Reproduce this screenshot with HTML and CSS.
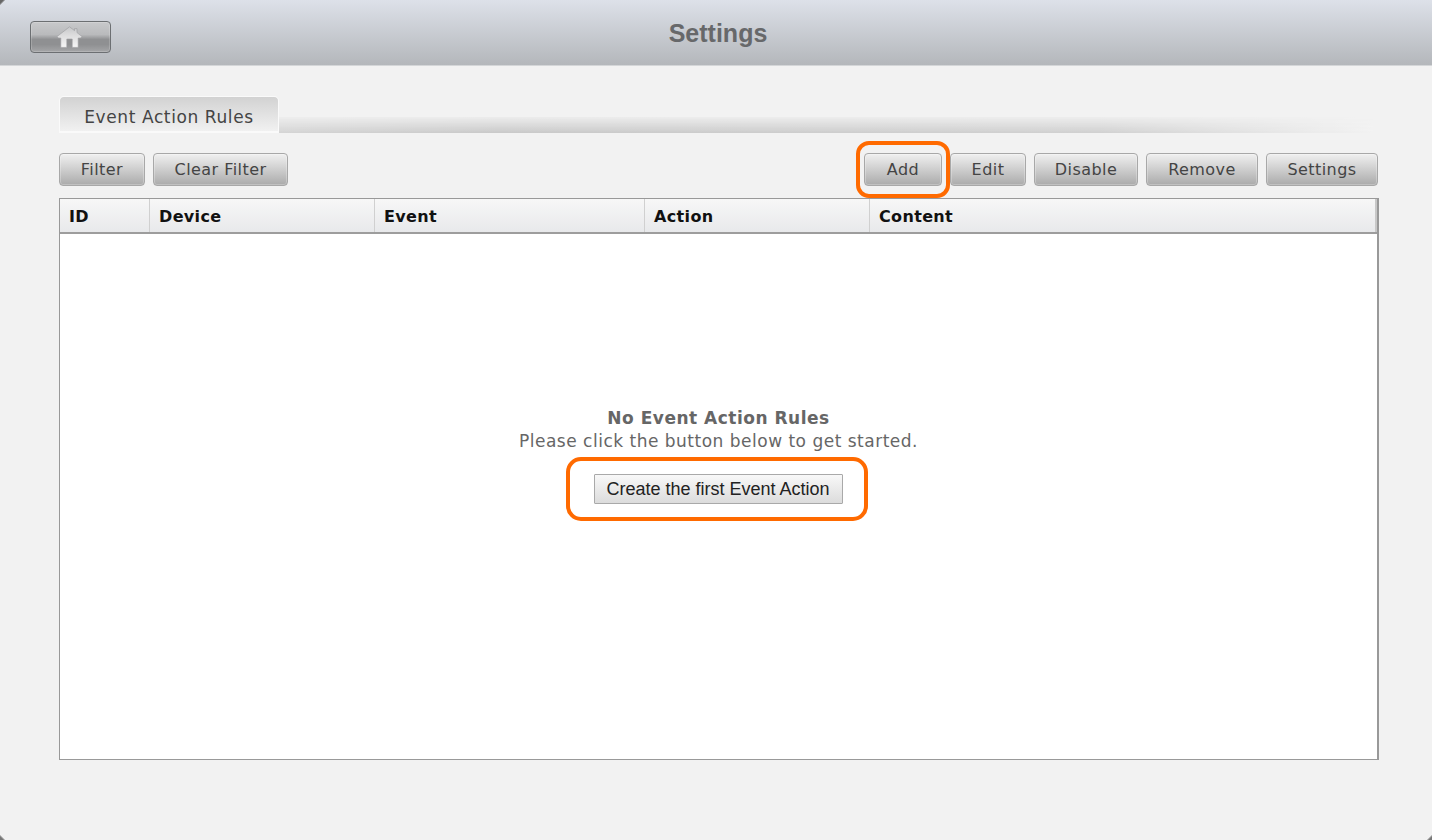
FILE: index.html
```html
<!DOCTYPE html>
<html lang="en">
<head>
<meta charset="utf-8">
<title>Settings</title>
<link rel="stylesheet" href="styles.css">
</head>
<body>
<div class="page">
  <header class="topbar">
    <button class="home" type="button" aria-label="Home">
      <svg class="home-icon" viewBox="0 0 26 22" width="26" height="22" aria-hidden="true">
        <defs>
          <linearGradient id="homeFill" x1="0" y1="0" x2="0" y2="1">
            <stop offset="0" stop-color="#c6c7c9"/>
            <stop offset="0.4" stop-color="#dcdcdd"/>
            <stop offset="1" stop-color="#f6f6f6"/>
          </linearGradient>
        </defs>
        <path fill="url(#homeFill)" stroke="#9a9b9d" stroke-width=".6" d="M12.5 .8 L17.5 4.6 V2.6 H20 V6.6 L25 10.6 L23.6 12 H21.2 V21.4 H15.2 V13 H9.8 V21.4 H3.8 V12 H1.4 L0 10.6 Z" />
      </svg>
    </button>
    <h1 class="title">Settings</h1>
  </header>
  <main class="content">
    <div class="tabs">
      <div class="tab">Event Action Rules</div>
      <div class="tab-rule"></div>
    </div>
    <div class="toolbar">
      <div class="group">
        <button class="btn w-filter" type="button">Filter</button>
        <button class="btn w-clear" type="button">Clear Filter</button>
      </div>
      <div class="group">
        <button class="btn w-add marked" type="button">Add</button>
        <button class="btn w-edit" type="button">Edit</button>
        <button class="btn w-disable" type="button">Disable</button>
        <button class="btn w-remove" type="button">Remove</button>
        <button class="btn w-settings" type="button">Settings</button>
      </div>
    </div>
    <section class="grid">
      <div class="grid-head">
        <div class="col c-id">ID</div>
        <div class="col c-device">Device</div>
        <div class="col c-event">Event</div>
        <div class="col c-action">Action</div>
        <div class="col c-content">Content</div>
      </div>
      <div class="grid-body">
        <div class="empty">
          <strong class="empty-title">No Event Action Rules</strong>
          <p class="empty-text">Please click the button below to get started.</p>
          <div class="create-mark">
            <button class="create" type="button">Create the first Event Action</button>
          </div>
        </div>
      </div>
    </section>
  </main>
  <span class="corner corner-tl"></span>
  <span class="corner corner-bl"></span>
  <span class="corner corner-br"></span>
</div>
</body>
</html>
```
FILE: styles.css
```css
*, *::before, *::after { box-sizing: border-box; }
html, body { margin: 0; padding: 0; }
body {
  width: 1432px;
  height: 840px;
  overflow: hidden;
  background: #f2f2f2;
  font-family: "DejaVu Sans", Verdana, sans-serif;
  color: #444;
}
.page { width: 1432px; height: 840px; display: flex; flex-direction: column; position: relative; }

.corner { position: absolute; width: 5px; height: 5px; }
.corner-tl { left: 0; top: 0; background: linear-gradient(135deg, #666 0 35%, transparent 60%); }
.corner-bl { left: 0; bottom: 0; background: linear-gradient(45deg, #777 0 35%, transparent 60%); }
.corner-br { right: 0; bottom: 0; background: linear-gradient(315deg, #777 0 35%, transparent 60%); }

.topbar {
  height: 66px;
  flex: none;
  display: flex;
  align-items: center;
  justify-content: center;
  position: relative;
  background: linear-gradient(#dde1e9, #b4b7bb);
  border-bottom: 1px solid #d4d6d8;
}
.title {
  margin: 0;
  font-family: "Liberation Sans", Arial, sans-serif;
  font-size: 25px;
  font-weight: bold;
  color: #67686a;
  line-height: 1;
  position: relative;
  top: 1px;
  left: 2px;
}
.home {
  position: absolute;
  left: 30px;
  top: 21px;
  width: 81px;
  height: 32px;
  padding: 0;
  display: flex;
  align-items: center;
  justify-content: center;
  border: 1px solid #6c6f72;
  border-radius: 4px;
  background: linear-gradient(#c8c9cb 0%, #b9babc 42%, #8f9092 58%, #8f9092 75%, #a5a6a8 100%);
  box-shadow: inset 0 0 0 1px rgba(255,255,255,.18);
}
.home-icon { filter: blur(.5px); margin-left: -1px; margin-top: -1px; }

.content { padding: 30px 54px 0 59px; flex: 1; display: flex; flex-direction: column; }

.tabs { display: flex; align-items: flex-end; height: 37px; }
.tab {
  width: 220px;
  height: 37px;
  border: 1px solid #fafafa;
  border-bottom-width: 2px;
  border-radius: 5px 5px 0 0;
  background: linear-gradient(#d2d2d2, #f1f1f1);
  font-size: 17px;
  letter-spacing: .6px;
  line-height: 40px;
  text-align: center;
  color: #444;
}
.tab-rule {
  flex: 1;
  height: 16px;
  margin-right: 5px;
  background: linear-gradient(90deg, #d4d4d4 0%, #c9c9c9 20%, #d0d0d0 75%, #f2f2f2 100%);
  -webkit-mask-image: linear-gradient(#0002, #000);
  mask-image: linear-gradient(#0002, #000);
}

.toolbar { display: flex; justify-content: space-between; margin-top: 20px; height: 33px; }
.group { display: flex; gap: 8px; }
.btn {
  height: 33px;
  padding: 0;
  border: 1px solid #a8a8a8;
  border-radius: 4px;
  background: linear-gradient(#f0f0f0, #ababab);
  box-shadow: inset 0 0 0 1px rgba(255,255,255,.25);
  font-family: "DejaVu Sans", Verdana, sans-serif;
  font-size: 16px;
  letter-spacing: .45px;
  color: #444;
  position: relative;
}
.w-filter { width: 86px; }
.w-clear { width: 135px; }
.w-add { width: 78px; }
.w-edit { width: 76px; }
.w-disable { width: 104px; }
.w-remove { width: 112px; }
.w-settings { width: 112px; }
.marked::after {
  content: "";
  position: absolute;
  left: -9px;
  top: -13px;
  width: 94px;
  height: 57px;
  border: 4px solid #ff6a00;
  border-radius: 13px;
  pointer-events: none;
}

.grid {
  margin-top: 12px;
  margin-right: -1px;
  height: 562px;
  border: 1px solid #999;
  border-right-width: 2px;
  background: #fff;
  display: flex;
  flex-direction: column;
}
.grid-head {
  height: 35px;
  flex: none;
  display: flex;
  background: linear-gradient(#f7f7f7, #e8e9eb);
  border-bottom: 2px solid #9d9d9d;
  position: relative;
}
.col {
  font-size: 16px;
  letter-spacing: .35px;
  font-weight: bold;
  color: #111;
  line-height: 35px;
  padding-left: 9px;
  border-right: 1px solid #d0d0d0;
  flex: none;
}
.c-id { width: 90px; }
.c-device { width: 225px; }
.c-event { width: 270px; }
.c-action { width: 225px; }
.c-content { flex: 1; border-right: 2px solid #c8c8c8; }

.grid-body { flex: 1; display: flex; justify-content: center; }
.empty {
  margin-top: 173px;
  display: flex;
  flex-direction: column;
  align-items: center;
  font-size: 17px;
  letter-spacing: .5px;
  color: #666;
}
.empty-title { line-height: 22px; font-weight: bold; }
.empty-text { margin: 0; line-height: 24px; }
.create-mark {
  margin-top: 4px;
  margin-right: 4px;
  width: 302px;
  height: 64px;
  border: 4px solid #ff6a00;
  border-radius: 15px;
  display: flex;
  align-items: center;
  justify-content: center;
}
.create {
  width: 249px;
  height: 30px;
  padding: 0;
  margin-left: 3px;
  border: 1px solid #a9a9a9;
  border-radius: 1px;
  background: linear-gradient(#f8f8f8, #dcdcdc);
  font-family: "Liberation Sans", Arial, sans-serif;
  font-size: 18px;
  letter-spacing: 0;
  color: #222;
}
```
